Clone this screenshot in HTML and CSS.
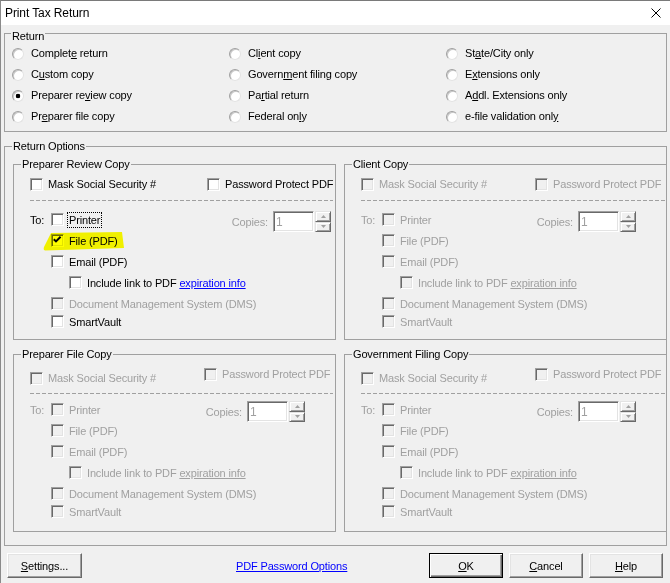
FILE: index.html
```html
<!DOCTYPE html>
<html>
<head>
<meta charset="utf-8">
<title>Print Tax Return</title>
<link rel="stylesheet" href="styles.css">
</head>
<body>
<div class="window">
  <div class="titlebar">
    <span class="title">Print Tax Return</span>
    <svg class="close" viewBox="0 0 10 10"><path d="M0.5 0.5 L9.5 9.5 M9.5 0.5 L0.5 9.5" stroke="#000" stroke-width="1" fill="none"/></svg>
  </div>
  <div class="body">
    <fieldset class="gb ret">
      <legend>Return</legend>
      <div class="radios">
        <div class="rb"><span class="radio"></span><span>Complet<u>e</u> return</span></div>
        <div class="rb"><span class="radio"></span><span>Cl<u>i</u>ent copy</span></div>
        <div class="rb"><span class="radio"></span><span>St<u>a</u>te/City only</span></div>
        <div class="rb"><span class="radio"></span><span>C<u>u</u>stom copy</span></div>
        <div class="rb"><span class="radio"></span><span>Govern<u>m</u>ent filing copy</span></div>
        <div class="rb"><span class="radio"></span><span>E<u>x</u>tensions only</span></div>
        <div class="rb"><span class="radio on"></span><span>Preparer re<u>v</u>iew copy</span></div>
        <div class="rb"><span class="radio"></span><span>Pa<u>r</u>tial return</span></div>
        <div class="rb"><span class="radio"></span><span>A<u>d</u>dl. Extensions only</span></div>
        <div class="rb"><span class="radio"></span><span>Pr<u>e</u>parer file copy</span></div>
        <div class="rb"><span class="radio"></span><span>Federal on<u>l</u>y</span></div>
        <div class="rb"><span class="radio"></span><span>e-file validation onl<u>y</u></span></div>
      </div>
    </fieldset>

    <fieldset class="gb opts">
      <legend>Return Options</legend>
      <div class="grid">

        <fieldset class="gb copy prc">
          <legend>Preparer Review Copy</legend>
          <div class="rowa">
            <div class="item mask"><span class="cb"></span><span>Mask Social Security #</span></div>
            <div class="item pw"><span class="cb"></span><span>Password Protect PDF</span></div>
          </div>
          <div class="sep"></div>
          <div class="torow">
            <div class="to-left"><span class="tolabel">To:</span><span class="cb"></span><span class="focus">Printer</span></div>
            <div class="copies"><span class="dt">Copies:</span><span class="num">1</span><span class="spin"><span class="sbtn"><svg width="5" height="3" viewBox="0 0 5 3"><path d="M2.5 0 L5 3 L0 3 Z" fill="#a0a0a0"/></svg></span><span class="sbtn"><svg width="5" height="3" viewBox="0 0 5 3"><path d="M0 0 L5 0 L2.5 3 Z" fill="#a0a0a0"/></svg></span></span></div>
          </div>
          <div class="opt hlrow">
            <svg class="hl" viewBox="0 0 82 19" width="82" height="19"><path d="M8 1 L79 0 L81 16 L2 18.5 Q0 18 1 15 Z" fill="#ffff00"/></svg>
            <span class="cb"><svg width="11" height="11" viewBox="1 1 11 11"><path d="M2.8 5.2 L5 7.4 L9.6 2.8" stroke="#000" stroke-width="2" fill="none"/></svg></span><span>File (PDF)</span>
          </div>
          <div class="opt"><span class="cb"></span><span>Email (PDF)</span></div>
          <div class="opt sub"><span class="cb"></span><span>Include link to PDF&nbsp;<span class="link">expiration info</span></span></div>
          <div class="opt"><span class="cb dis"></span><span class="dt">Document Management System (DMS)</span></div>
          <div class="opt last"><span class="cb"></span><span>SmartVault</span></div>
        </fieldset>

        <fieldset class="gb copy right">
          <legend>Client Copy</legend>
          <div class="rowa">
            <div class="item mask"><span class="cb dis"></span><span class="dt">Mask Social Security #</span></div>
            <div class="item pw"><span class="cb dis"></span><span class="dt">Password Protect PDF</span></div>
          </div>
          <div class="sep"></div>
          <div class="torow">
            <div class="to-left"><span class="tolabel dt">To:</span><span class="cb dis"></span><span class="dt">Printer</span></div>
            <div class="copies"><span class="dt">Copies:</span><span class="num">1</span><span class="spin"><span class="sbtn"><svg width="5" height="3" viewBox="0 0 5 3"><path d="M2.5 0 L5 3 L0 3 Z" fill="#a0a0a0"/></svg></span><span class="sbtn"><svg width="5" height="3" viewBox="0 0 5 3"><path d="M0 0 L5 0 L2.5 3 Z" fill="#a0a0a0"/></svg></span></span></div>
          </div>
          <div class="opt"><span class="cb dis"></span><span class="dt">File (PDF)</span></div>
          <div class="opt"><span class="cb dis"></span><span class="dt">Email (PDF)</span></div>
          <div class="opt sub"><span class="cb dis"></span><span class="dt">Include link to PDF&nbsp;<span class="dlink">expiration info</span></span></div>
          <div class="opt"><span class="cb dis"></span><span class="dt">Document Management System (DMS)</span></div>
          <div class="opt last"><span class="cb dis"></span><span class="dt">SmartVault</span></div>
        </fieldset>

        <fieldset class="gb copy lower pfc">
          <legend>Preparer File Copy</legend>
          <div class="rowa">
            <div class="item mask"><span class="cb dis"></span><span class="dt">Mask Social Security #</span></div>
            <div class="item pw"><span class="cb dis"></span><span class="dt">Password Protect PDF</span></div>
          </div>
          <div class="sep"></div>
          <div class="torow">
            <div class="to-left"><span class="tolabel dt">To:</span><span class="cb dis"></span><span class="dt">Printer</span></div>
            <div class="copies"><span class="dt">Copies:</span><span class="num">1</span><span class="spin"><span class="sbtn"><svg width="5" height="3" viewBox="0 0 5 3"><path d="M2.5 0 L5 3 L0 3 Z" fill="#a0a0a0"/></svg></span><span class="sbtn"><svg width="5" height="3" viewBox="0 0 5 3"><path d="M0 0 L5 0 L2.5 3 Z" fill="#a0a0a0"/></svg></span></span></div>
          </div>
          <div class="opt"><span class="cb dis"></span><span class="dt">File (PDF)</span></div>
          <div class="opt"><span class="cb dis"></span><span class="dt">Email (PDF)</span></div>
          <div class="opt sub"><span class="cb dis"></span><span class="dt">Include link to PDF&nbsp;<span class="dlink">expiration info</span></span></div>
          <div class="opt"><span class="cb dis"></span><span class="dt">Document Management System (DMS)</span></div>
          <div class="opt last"><span class="cb dis"></span><span class="dt">SmartVault</span></div>
        </fieldset>

        <fieldset class="gb copy right lower">
          <legend>Government Filing Copy</legend>
          <div class="rowa">
            <div class="item mask"><span class="cb dis"></span><span class="dt">Mask Social Security #</span></div>
            <div class="item pw"><span class="cb dis"></span><span class="dt">Password Protect PDF</span></div>
          </div>
          <div class="sep"></div>
          <div class="torow">
            <div class="to-left"><span class="tolabel dt">To:</span><span class="cb dis"></span><span class="dt">Printer</span></div>
            <div class="copies"><span class="dt">Copies:</span><span class="num">1</span><span class="spin"><span class="sbtn"><svg width="5" height="3" viewBox="0 0 5 3"><path d="M2.5 0 L5 3 L0 3 Z" fill="#a0a0a0"/></svg></span><span class="sbtn"><svg width="5" height="3" viewBox="0 0 5 3"><path d="M0 0 L5 0 L2.5 3 Z" fill="#a0a0a0"/></svg></span></span></div>
          </div>
          <div class="opt"><span class="cb dis"></span><span class="dt">File (PDF)</span></div>
          <div class="opt"><span class="cb dis"></span><span class="dt">Email (PDF)</span></div>
          <div class="opt sub"><span class="cb dis"></span><span class="dt">Include link to PDF&nbsp;<span class="dlink">expiration info</span></span></div>
          <div class="opt"><span class="cb dis"></span><span class="dt">Document Management System (DMS)</span></div>
          <div class="opt last"><span class="cb dis"></span><span class="dt">SmartVault</span></div>
        </fieldset>

      </div>
    </fieldset>

    <div class="footer">
      <span class="btn settings"><span><u>S</u>ettings...</span></span>
      <span class="link pdflink">PDF Password Options</span>
      <div class="btns">
        <span class="btn def"><span><u>O</u>K</span></span>
        <span class="btn"><span><u>C</u>ancel</span></span>
        <span class="btn"><span><u>H</u>elp</span></span>
      </div>
    </div>
  </div>
</div>
</body>
</html>
```

FILE: styles.css
```css
html, body {
  margin: 0;
  padding: 0;
}
body {
  width: 670px;
  height: 583px;
  overflow: hidden;
  background: #f0f0f0;
  font-family: "Liberation Sans", Arial, sans-serif;
  font-size: 11px;
  color: #000;
  letter-spacing: -0.15px;
}
.window {
  box-sizing: border-box;
  width: 670px;
  height: 583px;
  border-left: 1px solid #8a8a8a;
  border-top: 1px solid #7a7a7a;
  background: #f0f0f0;
}
.titlebar {
  height: 24px;
  background: #fff;
  display: flex;
  align-items: center;
  padding: 0 9px 0 4px;
}
.title {
  flex: 1;
  font-size: 12px;
  letter-spacing: -0.1px;
}
.close {
  display: block;
  width: 10px;
  height: 10px;
}
.body {
  padding: 0 3px;
}

/* group boxes */
.gb {
  margin: 0;
  min-width: 0;
  border: 1px solid #a0a0a0;
}
.gb > legend {
  padding: 0 1px;
  line-height: 13px;
}
.ret {
  padding: 1px 0 4px 7px;
}
.ret > legend {
  line-height: 11px;
  padding: 6px 1px 0;
  margin-left: -1px;
}
.radios {
  display: grid;
  grid-template-columns: 217px 217px 217px;
  grid-auto-rows: 21px;
}
.rb {
  display: flex;
  align-items: center;
  line-height: 13px;
  white-space: nowrap;
}
.radio {
  flex: none;
  width: 12px;
  height: 12px;
  box-sizing: border-box;
  border-radius: 50%;
  border: 1px solid;
  border-color: #a0a0a0 #e3e3e3 #e3e3e3 #a0a0a0;
  box-shadow: inset 1px 1px 0 #c8c8c8;
  background: #fff;
  margin-right: 7px;
}
.radio.on {
  background: radial-gradient(circle at 50% 50%, #000 0 2px, #fff 2.6px);
}

.opts {
  margin-top: 8px;
  padding: 5px 0 13px 8px;
}
.opts > legend {
  margin-left: -1px;
}
.grid {
  display: grid;
  grid-template-columns: 323px 322px;
  column-gap: 8px;
  row-gap: 8px;
  align-items: start;
}

/* copy groups */
.copy {
  padding: 6px 0 10px 16px;
}
.copy > legend {
  margin-left: -9px;
}
.copy.right {
  border-right: none;
}
.copy.lower {
  padding-bottom: 12px;
}
.rowa {
  display: flex;
  align-items: flex-start;
}
.item {
  display: flex;
  align-items: center;
  height: 14px;
  line-height: 14px;
  white-space: nowrap;
}
.mask {
  width: 174px;
}
.prc .pw {
  margin-left: 3px;
}
.lower .mask {
  margin-top: 4px;
}
.sep {
  height: 1px;
  margin: 9px 2px 0 0;
  background: repeating-linear-gradient(to right, #a0a0a0 0 4px, transparent 4px 6px);
}
.lower .sep {
  margin-top: 8px;
}
.right .sep {
  margin-right: 0;
}
.torow {
  display: flex;
  align-items: flex-start;
  height: 21px;
  margin-top: 8px;
}
.lower .torow {
  margin-top: 5px;
}
.to-left {
  display: flex;
  align-items: center;
  height: 21px;
  white-space: nowrap;
}
.tolabel {
  width: 21px;
}
.focus {
  border: 1px dotted #000;
  padding: 0 1px;
  margin-left: -2px;
  line-height: 14px;
}
.cb {
  flex: none;
  display: block;
  width: 13px;
  height: 13px;
  box-sizing: border-box;
  border: 1px solid;
  border-color: #a0a0a0 #fff #fff #a0a0a0;
  box-shadow: inset 1px 1px 0 #696969, inset -1px -1px 0 #e3e3e3;
  background: #fff;
  margin-right: 5px;
}
.cb svg {
  display: block;
}
.cb.dis {
  background: #f0f0f0;
}
.opt {
  display: flex;
  align-items: center;
  height: 21px;
  padding-left: 21px;
  white-space: nowrap;
}
.opt.sub {
  padding-left: 39px;
}
.opt.last {
  height: 15px;
}
.hlrow {
  position: relative;
}
.hl {
  position: absolute;
  left: 13px;
  top: 2px;
  mix-blend-mode: multiply;
}
.dt {
  color: #a0a0a0;
}
.link {
  color: #0000ff;
  text-decoration: underline;
}
.dlink {
  text-decoration: underline;
}

/* copies spinner */
.copies {
  display: flex;
  align-items: center;
  height: 21px;
  margin: 2px 4px 0 auto;
}
.right .copies,
.pfc .copies {
  margin-right: 30px;
}
.copies > .dt {
  margin-right: 5px;
}
.num {
  display: flex;
  align-items: center;
  box-sizing: border-box;
  width: 41px;
  height: 21px;
  padding-left: 2px;
  border: 1px solid;
  border-color: #a0a0a0 #fff #fff #a0a0a0;
  box-shadow: inset 1px 1px 0 #696969, inset -1px -1px 0 #e3e3e3;
  background: #fff;
  color: #a0a0a0;
  font-size: 12px;
}
.spin {
  display: flex;
  flex-direction: column;
  width: 16px;
  height: 21px;
  margin-left: 1px;
}
.sbtn {
  flex: 1;
  display: flex;
  align-items: center;
  justify-content: center;
  box-sizing: border-box;
  border: 1px solid;
  border-color: #e3e3e3 #696969 #696969 #e3e3e3;
  box-shadow: inset 1px 1px 0 #fff, inset -1px -1px 0 #a0a0a0;
  background: #f0f0f0;
}
.sbtn svg {
  display: block;
}

/* footer */
.footer {
  display: flex;
  align-items: center;
  margin-top: 7px;
  padding: 0 4px 0 3px;
}
.btn {
  display: flex;
  align-items: center;
  justify-content: center;
  box-sizing: border-box;
  width: 74px;
  height: 25px;
  border: 1px solid;
  border-color: #fff #696969 #696969 #fff;
  box-shadow: inset -1px -1px 0 #a0a0a0, inset 1px 1px 0 #e3e3e3;
  background: #f0f0f0;
}
.btn.settings {
  width: 75px;
}
.btn.def {
  border: 1px solid #000;
  box-shadow: inset 1px 1px 0 #fff, inset -1px -1px 0 #696969, inset -2px -2px 0 #a0a0a0;
}
.pdflink {
  margin-left: 154px;
}
.btns {
  display: flex;
  gap: 6px;
  margin-left: auto;
}
```
